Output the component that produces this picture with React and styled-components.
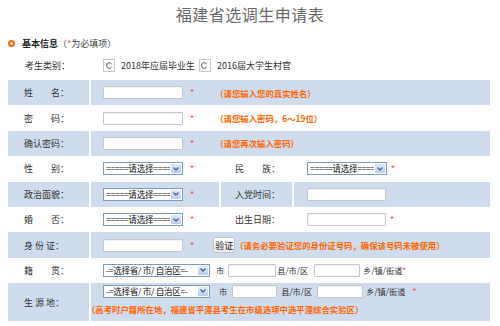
import React from 'react';
import styled, { createGlobalStyle } from 'styled-components';

const GlobalStyle = createGlobalStyle`
  body {
    margin: 0;
    background: #fff;
    font-family: "Noto Sans CJK SC", "Liberation Sans", sans-serif;
    font-size: 9px;
    color: #333;
  }
`;

const Page = styled.div`
  width: 500px;
  height: 326px;
  overflow: hidden;
`;

const Title = styled.h1`
  margin: 0;
  height: 30px;
  line-height: 28px;
  text-align: center;
  font-size: 16px;
  font-weight: normal;
  letter-spacing: 0.5px;
  color: #6b6b6b;
`;

const SectionHead = styled.div`
  margin-top: 5px;
  height: 16px;
  padding-left: 8px;
  display: flex;
  align-items: center;
`;

const Bullet = styled.span`
  width: 7px;
  height: 7px;
  box-sizing: border-box;
  border: 2px solid #f60;
  border-radius: 50%;
  margin-right: 7px;
`;

const SectionName = styled.b`
  color: #222;
`;

const Note = styled.span`
  color: #444;
`;

const TypeRow = styled.div`
  height: 29px;
  padding-left: 25px;
  display: flex;
  align-items: center;
`;

const TypeLabel = styled.span`
  width: 78px;
`;

const RadioBox = styled.span`
  width: 12px;
  height: 13px;
  box-sizing: border-box;
  border: 1px solid #c9c9c9;
  background: #fff;
  display: flex;
  align-items: center;
  justify-content: center;
  margin-right: 6px;
`;

const RadioText = styled.span`
  margin-right: 4px;
`;

const Table = styled.div`
  margin-left: 8px;
  width: 482px;
`;

const Row = styled.div`
  display: grid;
  grid-template-columns: ${p => (p.$double ? '81px 128px 71px 1fr' : '81px 1fr')};
  column-gap: 2px;
  height: ${p => (p.$tall ? '38px' : '25.4px')};
  background: #fff;
`;

const LabelCell = styled.div`
  background: ${p => (p.$blue ? '#cedced' : '#fff')};
  display: flex;
  align-items: center;
  padding-left: ${p => p.$pad || 16}px;
  white-space: pre;
`;

const FieldCell = styled.div`
  background: ${p => (p.$blue ? '#cedced' : '#fff')};
  display: flex;
  align-items: center;
  padding-left: ${p => p.$pad || 12}px;
  white-space: nowrap;
`;

const StackCell = styled.div`
  background: ${p => (p.$blue ? '#cedced' : '#fff')};
  display: flex;
  flex-direction: column;
  padding-left: 12px;
  padding-top: 1px;
`;

const Line = styled.div`
  display: flex;
  align-items: center;
  white-space: nowrap;
  height: ${p => p.$h || 14}px;
  margin-left: ${p => p.$shift || 0}px;
`;

const TextInput = styled.input`
  width: ${p => p.$w || 80}px;
  height: 13px;
  box-sizing: border-box;
  margin: 0;
  padding: 0 2px;
  border: 1px solid #c8c8c8;
  border-radius: 1px;
  background: #fff;
  box-shadow: inset 0 1px 1px rgba(0, 0, 0, 0.05);
  font: inherit;
  outline: none;
`;

const SelectBox = styled.div`
  width: ${p => p.$w || 80}px;
  height: 13px;
  box-sizing: border-box;
  border: 1px solid #7f9db9;
  background: #fff;
  display: flex;
  align-items: stretch;
  font-size: 8.6px;
`;

const SelectText = styled.span`
  flex: 1;
  padding-left: 2px;
  line-height: 11px;
  letter-spacing: -0.3px;
  overflow: hidden;
  white-space: nowrap;
  color: #111;
`;

const SelectBtn = styled.span`
  width: 12px;
  flex: none;
  background: linear-gradient(#e3ebfc, #b8cbf2);
  border: 1px solid #fff;
  box-sizing: border-box;
  display: flex;
  align-items: center;
  justify-content: center;
`;

const Req = styled.span`
  color: #f44;
  margin-left: ${p => p.$m ?? 7}px;
`;

const Hint = styled.span`
  color: #ff6600;
  font-weight: bold;
  font-size: 8.4px;
  margin-left: ${p => p.$m ?? 15}px;
`;

const VerifyBtn = styled.span`
  margin-left: 19px;
  width: 22px;
  height: 16px;
  box-sizing: border-box;
  border: 1px solid #c6c6c6;
  border-radius: 2px;
  background: linear-gradient(#fbfbfb, #e9e9e9);
  display: flex;
  align-items: center;
  justify-content: center;
  color: #222;
`;

const Unit = styled.span`
  font-size: 8.2px;
  margin: 0 ${p => p.$r ?? 3}px 0 ${p => p.$l ?? 3}px;
`;

function Radio() {
  return (
    <RadioBox>
      <svg width="7" height="7" viewBox="0 0 7 7">
        <circle cx="3.5" cy="3.5" r="2.8" fill="#fff" stroke="#d6d6d6" strokeWidth="0.8" />
        <path d="M5.3 1.5A2.8 2.8 0 1 0 5.3 5.5" fill="none" stroke="#555" strokeWidth="0.9" />
      </svg>
    </RadioBox>
  );
}

function Select({ w, text }) {
  return (
    <SelectBox $w={w}>
      <SelectText>{text}</SelectText>
      <SelectBtn>
        <svg width="6" height="4" viewBox="0 0 6 4">
          <polyline points="0.5,0.5 3,3 5.5,0.5" fill="none" stroke="#4a5f8a" strokeWidth="1.3" />
        </svg>
      </SelectBtn>
    </SelectBox>
  );
}

const PICK = '=====请选择====';
const AREA = '-=选择省/ 市/ 自治区=-';

export default function App() {
  return (
    <Page>
      <GlobalStyle />
      <Title>福建省选调生申请表</Title>
      <SectionHead>
        <Bullet />
        <SectionName>基本信息</SectionName>
        <Note>（<Req $m={0}>*</Req>为必填项）</Note>
      </SectionHead>
      <TypeRow>
        <TypeLabel>考生类别：</TypeLabel>
        <Radio />
        <RadioText>2018年应届毕业生</RadioText>
        <Radio />
        <RadioText>2016届大学生村官</RadioText>
      </TypeRow>
      <Table>
        <Row>
          <LabelCell $blue>{'姓　　名：'}</LabelCell>
          <FieldCell $blue>
            <TextInput />
            <Req>*</Req>
            <Hint $m={21}>（请您输入您的真实姓名）</Hint>
          </FieldCell>
        </Row>
        <Row>
          <LabelCell>{'密　　码：'}</LabelCell>
          <FieldCell>
            <TextInput type="password" />
            <Req>*</Req>
            <Hint $m={21}>（请您输入密码，6～19位）</Hint>
          </FieldCell>
        </Row>
        <Row>
          <LabelCell $blue>确认密码：</LabelCell>
          <FieldCell $blue>
            <TextInput type="password" />
            <Req>*</Req>
            <Hint $m={21}>（请您再次输入密码）</Hint>
          </FieldCell>
        </Row>
        <Row $double>
          <LabelCell>{'性　　别：'}</LabelCell>
          <FieldCell>
            <Select text={PICK} />
            <Req>*</Req>
          </FieldCell>
          <LabelCell $pad={14}>{'民　　族：'}</LabelCell>
          <FieldCell $pad={13}>
            <Select text={PICK} />
            <Req $m={4}>*</Req>
          </FieldCell>
        </Row>
        <Row $double>
          <LabelCell $blue>政治面貌：</LabelCell>
          <FieldCell $blue>
            <Select text={PICK} />
            <Req>*</Req>
          </FieldCell>
          <LabelCell $blue $pad={14}>入党时间：</LabelCell>
          <FieldCell $blue $pad={13}>
            <TextInput $w={79} />
          </FieldCell>
        </Row>
        <Row $double>
          <LabelCell>{'婚　　否：'}</LabelCell>
          <FieldCell>
            <Select text={PICK} />
            <Req>*</Req>
          </FieldCell>
          <LabelCell $pad={14}>出生日期：</LabelCell>
          <FieldCell $pad={13}>
            <TextInput $w={79} />
            <Req $m={4}>*</Req>
          </FieldCell>
        </Row>
        <Row>
          <LabelCell $blue>{'身 份 证：'}</LabelCell>
          <FieldCell $blue>
            <TextInput />
            <Req>*</Req>
            <VerifyBtn>验证</VerifyBtn>
            <Hint $m={0}>（请务必要验证您的身份证号码，确保该号码未被使用）</Hint>
          </FieldCell>
        </Row>
        <Row>
          <LabelCell>{'籍　　贯：'}</LabelCell>
          <FieldCell>
            <Select w={107} text={AREA} />
            <Unit $l={6} $r={4}>市</Unit>
            <TextInput $w={48} />
            <Unit $l={1} $r={6}>县/市/区</Unit>
            <TextInput $w={46} />
            <Unit>乡/镇/街道<Req $m={0}>*</Req></Unit>
          </FieldCell>
        </Row>
        <Row $tall>
          <LabelCell $blue>{'生 源 地：'}</LabelCell>
          <StackCell $blue>
            <Line>
              <Select w={107} text={AREA} />
              <Unit $l={9} $r={5}>市</Unit>
              <TextInput $w={45} />
              <Unit $l={4} $r={5}>县/市/区</Unit>
              <TextInput $w={46} />
              <Unit>乡/镇/街道</Unit>
              <Req $m={4}>*</Req>
            </Line>
            <Line $h={22} $shift={-16}>
              <Hint $m={0}>（高考时户籍所在地，福建省平潭县考生在市级选项中选平潭综合实验区）</Hint>
            </Line>
          </StackCell>
        </Row>
      </Table>
    </Page>
  );
}
